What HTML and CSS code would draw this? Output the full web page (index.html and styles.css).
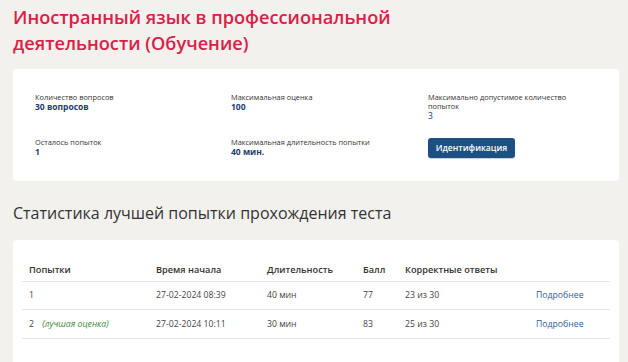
FILE: index.html
```html
<!DOCTYPE html>
<html lang="ru">
<head>
<meta charset="utf-8">
<link rel="stylesheet" href="styles.css">
</head>
<body>
<h1 class="title">Иностранный язык в профессиональной деятельности (Обучение)</h1>
<section class="card info">
  <div class="info-grid">
    <div class="item"><div class="label">Количество вопросов</div><div class="value">30 вопросов</div></div>
    <div class="item"><div class="label">Максимальная оценка</div><div class="value">100</div></div>
    <div class="item"><div class="label">Максимально допустимое количество попыток</div><div class="value num">3</div></div>
    <div class="item"><div class="label">Осталось попыток</div><div class="value">1</div></div>
    <div class="item"><div class="label">Максимальная длительность попытки</div><div class="value">40 мин.</div></div>
    <div class="item"><button class="btn">Идентификация</button></div>
  </div>
</section>
<h2 class="subtitle">Статистика лучшей попытки прохождения теста</h2>
<section class="card stats">
  <table class="table">
    <thead>
      <tr><th class="c1">Попытки</th><th class="c2">Время начала</th><th class="c3">Длительность</th><th class="c4">Балл</th><th class="c5">Корректные ответы</th><th class="c6"></th></tr>
    </thead>
    <tbody>
      <tr><td>1</td><td>27-02-2024 08:39</td><td>40 мин</td><td>77</td><td>23 из 30</td><td><a class="more">Подробнее</a></td></tr>
      <tr><td>2 <span class="best">(лучшая оценка)</span></td><td>27-02-2024 10:11</td><td>30 мин</td><td>83</td><td>25 из 30</td><td><a class="more">Подробнее</a></td></tr>
    </tbody>
  </table>
</section>
</body>
</html>
```
FILE: styles.css
```css
* { box-sizing: border-box; }
html, body { margin: 0; padding: 0; }
body {
  background: #f2f1ee;
  font-family: "Open Sans", "Noto Sans", sans-serif;
  padding: 4px 9px 0 13px;
  overflow: hidden;
  height: 362px;
}
.title {
  margin: 0;
  color: #d92046;
  font-family: "Open Sans", sans-serif;
  font-weight: 600;
  font-size: 18.2px;
  line-height: 26px;
  width: 420px;
}
.card {
  background: #fff;
  border-radius: 3px;
  box-shadow: 0 0 1px rgba(0,0,0,0.06);
}
.info {
  margin-top: 13px;
  height: 112px;
  padding: 24px 22px 0 22px;
}
.info-grid {
  display: grid;
  grid-template-columns: 196px 197px 1fr;
  row-gap: 10px;
}
.item { min-height: 35px; }
.label {
  font-size: 7.4px;
  line-height: 9px;
  color: #333;
  max-width: 150px;
}
.value {
  font-size: 8.5px;
  line-height: 10px;
  font-weight: 700;
  color: #1e3c6e;
}
.value.num { font-weight: 400; }
.btn {
  display: block;
  margin-top: 0;
  background: #1c5085;
  color: #fff;
  border: none;
  border-radius: 3px;
  font-family: "Open Sans", sans-serif;
  font-weight: 600;
  font-size: 8.6px;
  width: 87px;
  height: 20px;
  padding: 0;
  box-shadow: 0 1px 1px rgba(0,0,0,0.2);
}
.subtitle {
  margin: 21px 0 0 0;
  font-weight: 400;
  font-size: 16px;
  line-height: 22px;
  color: #333;
}
.stats {
  margin-top: 16px;
  height: 140px;
  padding: 22px 9px 0 9px;
}
.table {
  width: 100%;
  border-collapse: collapse;
  font-size: 8.7px;
  color: #444;
}
.table th {
  text-align: left;
  font-weight: 600;
  font-size: 9.2px;
  color: #333;
  height: 19px;
  vertical-align: top;
  padding: 1px 0 0 7px;
  border-bottom: 1px solid #e4e4e4;
}
.table td {
  height: 28.5px;
  padding: 0 0 0 7px;
  border-bottom: 1px solid #e4e4e4;
}
.c1 { width: 127px; }
.c2 { width: 111px; }
.c3 { width: 96px; }
.c4 { width: 42px; }
.c5 { width: 131px; }
.best {
  color: #3a8a3a;
  font-style: italic;
  margin-left: 6px;
  font-size: 8.7px;
}
.more { color: #2f5f93; }
```
